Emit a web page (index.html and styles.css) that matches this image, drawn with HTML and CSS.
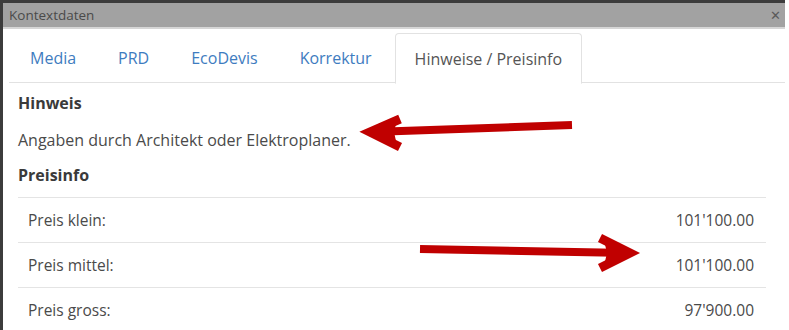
FILE: index.html
```html
<!DOCTYPE html>
<html lang="de">
<head>
    <meta charset="UTF-8">
    <title>Kontextdaten</title>
    <link rel="stylesheet" href="styles.css">
</head>
<body>
    <div class="window">
        <div class="titlebar">
            <span class="title">Kontextdaten</span>
            <span class="close">&#x2715;</span>
        </div>
        <div class="body">
            <ul class="tabs">
                <li class="tab">Media</li>
                <li class="tab">PRD</li>
                <li class="tab">EcoDevis</li>
                <li class="tab">Korrektur</li>
                <li class="tab active">Hinweise / Preisinfo</li>
            </ul>
            <div class="content">
                <h3>Hinweis</h3>
                <p>Angaben durch Architekt oder Elektroplaner.</p>
                <h3>Preisinfo</h3>
                <table class="prices">
                    <tr><td>Preis klein:</td><td class="num">101'100.00</td></tr>
                    <tr><td>Preis mittel:</td><td class="num">101'100.00</td></tr>
                    <tr><td>Preis gross:</td><td class="num">97'900.00</td></tr>
                </table>
            </div>
        </div>

        <!-- annotation arrows drawn over the screenshot -->
        <svg class="arrows" width="789" height="330" viewBox="0 0 789 330">
            <g fill="none" stroke="#c00000" stroke-width="8">
                <line x1="572" y1="125" x2="372" y2="132" />
                <polyline points="400,119 370,132 400,147" stroke-width="9" />
                <line x1="420" y1="249" x2="628" y2="253" />
                <polyline points="600,238 630,253 600,268" stroke-width="9" />
            </g>
            <polygon points="365,133 398,116 394,132 398,150" fill="#c00000" />
            <polygon points="636,253 603,236 607,253 603,270" fill="#c00000" />
        </svg>
    </div>
</body>
</html>
```

FILE: styles.css
```css
body {
    margin: 0;
    font-family: "Open Sans", Arial, sans-serif;
    background: #ffffff;
}
.window {
    position: relative;
    width: 782px;
    height: 327px;
    border-top: 3px solid #3c3c3c;
    border-left: 3px solid #3c3c3c;
    overflow: hidden;
}
.titlebar {
    display: flex;
    justify-content: space-between;
    align-items: center;
    height: 24px;
    padding: 0 4px 0 6px;
    background: #a2a2a2;
    border-bottom: 2px solid #d6d6d6;
}
.title {
    font-size: 13.5px;
    color: #4a4a4a;
}
.close {
    font-size: 13px;
    color: #5a5a5a;
}
.body {
    padding: 4px 0 0 6px;
}
.tabs {
    display: flex;
    list-style: none;
    margin: 0;
    padding: 0;
    width: 776px;
    height: 49px;
    border-bottom: 1px solid #e2e2e2;
}
.tab {
    padding: 0 21px;
    line-height: 50px;
    font-size: 16px;
    color: #3e7cc0;
}
.tab.active {
    color: #555;
    background: #fff;
    border: 1px solid #e2e2e2;
    border-bottom-color: #fff;
    border-radius: 4px 4px 0 0;
    margin-left: 2px;
    padding: 0 19px;
    height: 49px;
    line-height: 50px;
}
.content {
    padding: 8px 0 0 9px;
    color: #444;
}
.content h3 {
    margin: 0;
    font-size: 16px;
    font-weight: bold;
    color: #3a3a3a;
    line-height: 24px;
}
.content p {
    margin: 15px 0 13px 0;
    font-size: 16px;
    line-height: 20px;
    color: #4a4a4a;
}
.prices {
    margin-top: 10px;
    width: 748px;
    border-collapse: collapse;
    font-size: 15.5px;
    color: #4a4a4a;
}
.prices td {
    border-top: 1px solid #e4e4e4;
    height: 44px;
    padding: 0 12px 0 10px;
}
.prices .num {
    text-align: right;
}
.arrows {
    position: absolute;
    left: -3px;
    top: -3px;
}
```
